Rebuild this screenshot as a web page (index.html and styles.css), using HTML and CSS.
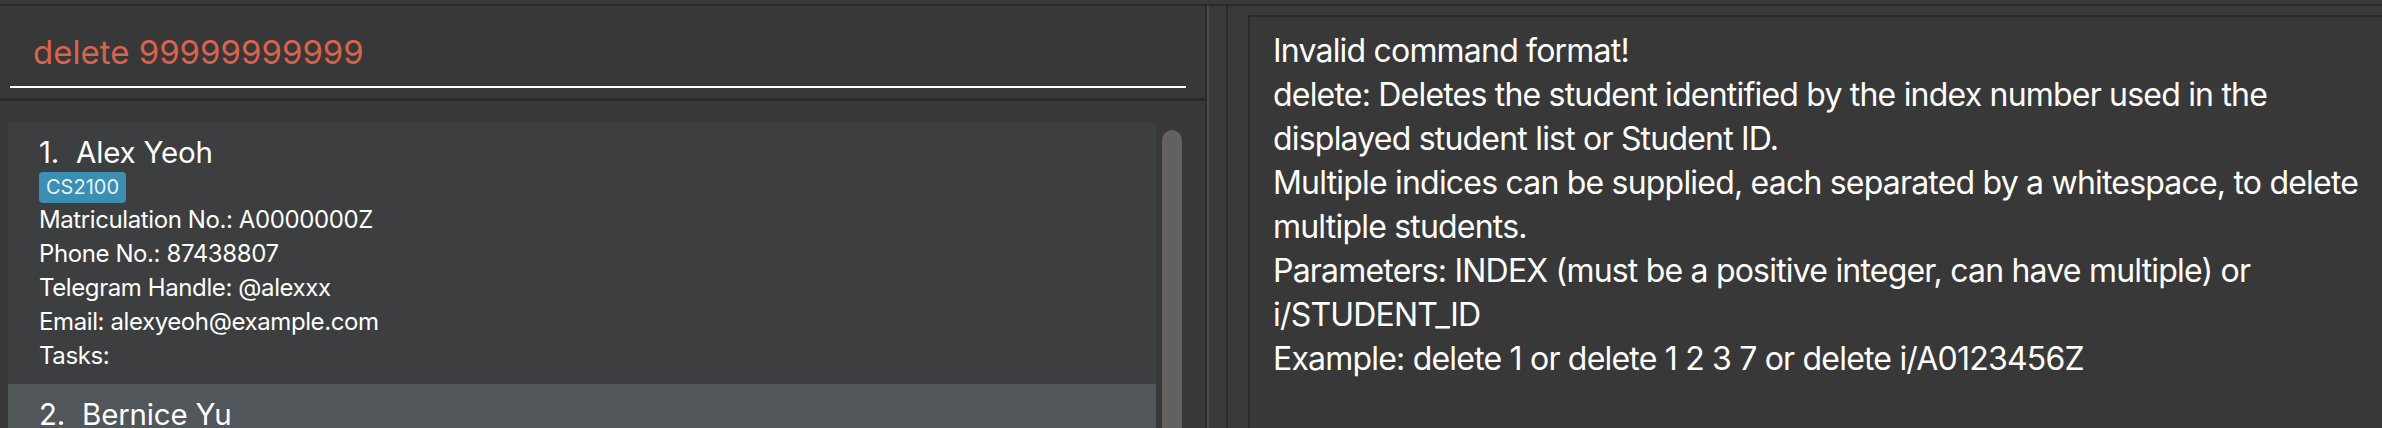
FILE: index.html
```html
<!DOCTYPE html>
<html>
<head>
<meta charset="utf-8">
<link rel="stylesheet" href="styles.css">
</head>
<body>
<div class="app">
  <div class="topline"></div>
  <div class="main">
    <section class="left">
      <div class="command">
        <div class="field">delete 99999999999</div>
      </div>
      <div class="sep"></div>
      <div class="list">
        <div class="cards">
          <div class="card">
            <div class="name"><span class="id">1.</span><span>Alex Yeoh</span></div>
            <div class="tags"><span class="tag">CS2100</span></div>
            <div class="detail">Matriculation No.: A0000000Z</div>
            <div class="detail">Phone No.: 87438807</div>
            <div class="detail">Telegram Handle: @alexxx</div>
            <div class="detail">Email: alexyeoh@example.com</div>
            <div class="detail">Tasks:</div>
          </div>
          <div class="card alt">
            <div class="name"><span class="id">2.</span><span>Bernice Yu</span></div>
          </div>
        </div>
        <div class="scrollbar"><div class="thumb"></div></div>
      </div>
    </section>
    <div class="divider"></div>
    <section class="right">
      <div class="outer">
        <div class="result">Invalid command format!
delete: Deletes the student identified by the index number used in the
displayed student list or Student ID.
Multiple indices can be supplied, each separated by a whitespace, to delete
multiple students.
Parameters: INDEX (must be a positive integer, can have multiple) or
i/STUDENT_ID
Example: delete 1 or delete 1 2 3 7 or delete i/A0123456Z</div>
      </div>
    </section>
  </div>
</div>
</body>
</html>
```

FILE: styles.css
```css
html, body {
  margin: 0;
  padding: 0;
  background: #393939;
  overflow: hidden;
}
.app {
  width: 2382px;
  height: 428px;
  display: flex;
  flex-direction: column;
  font-family: Inter, "Liberation Sans", sans-serif;
  color: #ffffff;
  padding-top: 4px;
  box-sizing: border-box;
}
.topline {
  height: 2px;
  background: #2b2b2b;
  flex: none;
}
.main {
  flex: 1;
  display: flex;
  min-height: 0;
}
.left {
  width: 1205px;
  flex: none;
  display: flex;
  flex-direction: column;
  background: #383838;
}
.command {
  padding: 0 19px 10px 10px;
}
.field {
  padding: 26px 0 14px 23px;
  font-size: 33px;
  line-height: 40px;
  color: #d9634c;
  border-bottom: 2px solid #ffffff;
  white-space: nowrap;
}
.sep {
  height: 3px;
  background: #2b2b2b;
  flex: none;
}
.list {
  flex: 1;
  display: flex;
  gap: 6px;
  padding: 21px 0 0 8px;
  overflow: hidden;
}
.cards {
  width: 1148px;
  display: flex;
  flex-direction: column;
}
.card {
  background: #3c3e40;
  padding: 13px 0 11px 31px;
}
.card.alt {
  background: #50565a;
  flex: 1;
}
.name {
  display: flex;
  gap: 17px;
  font-size: 29.5px;
  line-height: 35px;
  letter-spacing: -0.2px;
}
.tags {
  display: flex;
  margin-top: 2px;
}
.tag {
  background: #3a8fb3;
  color: #e6f2f5;
  font-size: 20px;
  height: 31px;
  line-height: 31px;
  padding: 0 7px;
  border-radius: 4px;
}
.detail {
  font-size: 24px;
  line-height: 34px;
  letter-spacing: -0.4px;
  white-space: nowrap;
}
.scrollbar {
  width: 20px;
  padding-top: 8px;
}
.thumb {
  height: 400px;
  background: #616161;
  border-radius: 10px 10px 0 0;
}
.divider {
  width: 2px;
  flex: none;
  background: #2b2b2b;
  border-right: 2px solid #4b4b4b;
}
.right {
  flex: 1;
  background: #393939;
  padding-left: 17px;
  display: flex;
}
.outer {
  flex: 1;
  border-left: 2px solid #2b2b2b;
  padding: 9px 0 0 20px;
  display: flex;
}
.result {
  flex: 1;
  border-top: 2px solid #2b2b2b;
  border-left: 2px solid #2b2b2b;
  background: #383838;
  padding: 12px 0 0 23px;
  font-size: 32px;
  line-height: 44px;
  letter-spacing: -0.8px;
  white-space: pre;
}
```
